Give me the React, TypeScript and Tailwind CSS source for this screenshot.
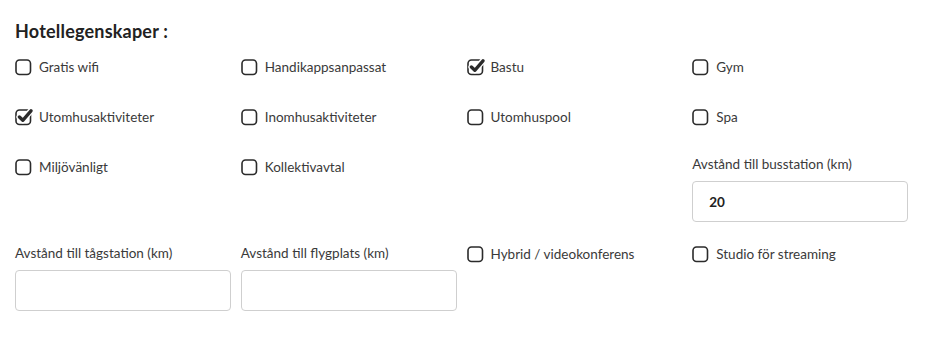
import React from 'react';

const font = { fontFamily: 'Lato, "Open Sans", Arial, sans-serif' };

const Box: React.FC<{ checked?: boolean }> = ({ checked }) => (
  <svg width="18" height="18" viewBox="0 0 18 18" className="shrink-0">
    <rect x="1" y="2" width="14.5" height="14.5" rx="3.5" fill="none" stroke="#2b2b2b" strokeWidth="1.6" />
    {checked && (
      <>
        <path d="M4.4 9 L7.8 12.3 L16 2.8" fill="none" stroke="#fff" strokeWidth="6" strokeLinecap="round" strokeLinejoin="round" />
        <path d="M4.4 9 L7.8 12.3 L16 2.8" fill="none" stroke="#2b2b2b" strokeWidth="3.3" strokeLinecap="round" strokeLinejoin="round" />
      </>
    )}
  </svg>
);

const Check: React.FC<{ label: string; checked?: boolean; last?: boolean }> = ({ label, checked, last }) => (
  <div className={last ? '-mt-[2px]' : 'h-[50px]'}>
    <label className="flex items-center gap-[6px] h-[22px] text-[13.5px] text-[#3a3a3a] cursor-pointer">
      <Box checked={checked} />
      <span>{label}</span>
    </label>
  </div>
);

const Field: React.FC<{ label: string; value?: string }> = ({ label, value }) => (
  <div className="pb-[23px]">
    <div className="text-[13.5px] leading-[16px] text-[#3a3a3a]">{label}</div>
    <input
      defaultValue={value}
      className="mt-[9px] w-full h-[41px] rounded-[4px] border border-[#cfcfcf] px-[16px] text-[13.5px] font-bold text-[#222] outline-none"
    />
  </div>
);

export default function App() {
  return (
    <div className="bg-white w-[929px] h-[354px] pl-[15px] pr-[21px] pt-[21px]" style={font}>
      <h2 className="text-[18px] leading-[20px] font-bold text-[#222] tracking-[0.2px]">Hotellegenskaper :</h2>
      <div className="grid grid-cols-4 gap-x-[10px] mt-[15px]">
        <Check label="Gratis wifi" />
        <Check label="Handikappsanpassat" />
        <Check label="Bastu" checked />
        <Check label="Gym" />

        <Check label="Utomhusaktiviteter" checked />
        <Check label="Inomhusaktiviteter" />
        <Check label="Utomhuspool" />
        <Check label="Spa" />

        <Check label="Miljövänligt" />
        <Check label="Kollektivavtal" />
        <div />
        <Field label="Avstånd till busstation (km)" value="20" />

        <Field label="Avstånd till tågstation (km)" />
        <Field label="Avstånd till flygplats (km)" />
        <Check label="Hybrid / videokonferens" last />
        <Check label="Studio för streaming" last />
      </div>
    </div>
  );
}
